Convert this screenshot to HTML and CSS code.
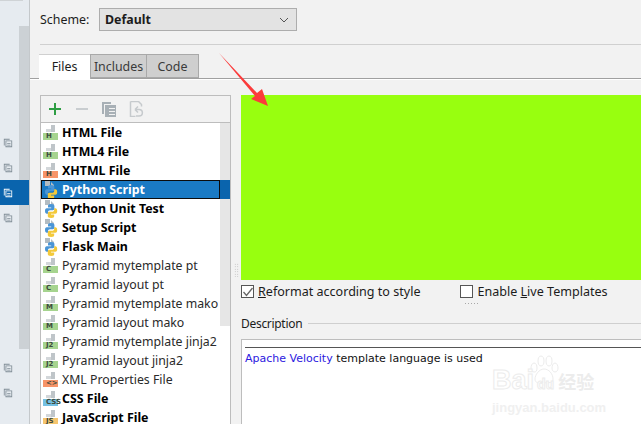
FILE: index.html
```html
<!DOCTYPE html>
<html lang="en">
<head>
<meta charset="utf-8">
<title>File and Code Templates</title>
<link rel="stylesheet" href="styles.css">
</head>
<body>
<svg class="defs" width="0" height="0" aria-hidden="true">
  <defs>
    <symbol id="copy" viewBox="0 0 12 12">
      <path d="M1 1h7v1H2v7H1z M3 3h8v8H3z M4 4v6h6V4z" fill="#7f8c95" fill-rule="evenodd"/>
      <path d="M5 6h4v1H5z M5 8h4v1H5z" fill="#7f8c95"/>
    </symbol>
    <symbol id="py" viewBox="0 0 16 18">
      <path d="M2 0h5v5H2z M8 1l3 3v1H8z" fill="#b3bcc2"/>
      <path d="M8 4c-2.600 0-3 1-3 2v1.500h3.200v.7H3.800C2.500 8.200 2 9.200 2 11s.7 2.800 1.800 2.800H5V12c0-1 .9-1.800 2-1.800h2.800c1 0 1.600-.7 1.600-1.600V6C11.400 4.800 10.500 4 8 4z" fill="#4a95d6"/>
      <path d="M8.200 18c2.600 0 3-1 3-2v-1.500H8v-.7h4.400c1.300 0 1.800-1 1.800-2.800s-.7-2.800-1.800-2.800H11.200V10c0 1-.9 1.800-2 1.800H6.400c-1 0-1.600.7-1.600 1.600V16c0 1.200.9 2 3.400 2z" fill="#f3c93a"/>
    </symbol>
  </defs>
</svg>
<div class="app">
  <aside class="side">
    <div class="side-top"></div>
    <div class="side-body">
      <div class="side-rows">
        <div class="side-row"><svg class="side-icon"><use href="#copy"/></svg></div>
        <div class="side-row"><svg class="side-icon"><use href="#copy"/></svg></div>
        <div class="side-row is-on"><svg class="side-icon"><use href="#copy"/></svg></div>
        <div class="side-row"><svg class="side-icon"><use href="#copy"/></svg></div>
        <div class="side-spacer"></div>
        <div class="side-row"><svg class="side-icon"><use href="#copy"/></svg></div>
        <div class="side-row"><svg class="side-icon"><use href="#copy"/></svg></div>
      </div>
      <div class="side-gutter"></div>
    </div>
  </aside>

  <main class="main">
    <div class="scheme">
      <label class="scheme-label">Scheme:</label>
      <div class="combo">
        <span class="combo-text">Default</span>
        <svg class="combo-arrow" width="10" height="6" viewBox="0 0 10 6"><path d="M1 1l4 4 4-4" fill="none" stroke="#555" stroke-width="1"/></svg>
      </div>
    </div>
    <div class="rule"></div>

    <div class="tabs">
      <div class="tab is-active">Files</div>
      <div class="tab tab-inc">Includes</div>
      <div class="tab tab-code">Code</div>
    </div>

    <div class="content">
      <section class="panel">
        <div class="toolbar">
          <svg class="tool" width="16" height="16" viewBox="0 0 16 16"><path d="M7 2h2v5h5v2H9v5H7V9H2V7h5z" fill="#2f9e44"/></svg>
          <svg class="tool" width="16" height="16" viewBox="0 0 16 16"><path d="M2 7h12v2H2z" fill="#c9cdd0"/></svg>
          <svg class="tool" width="16" height="16" viewBox="0 0 16 16"><path d="M1 1h9v2H3v10H1z" fill="#a8b0b6"/><path d="M4 4h11v12H4z" fill="#a8b0b6"/><path d="M8 7h6v1H8zM8 10h6v1H8zM8 13h6v1H8z" fill="#f2f2f2"/></svg>
          <svg class="tool" width="16" height="16" viewBox="0 0 16 16"><path d="M2.500.500h8l3 3v2M2.500.500v15h5" fill="none" stroke="#c6cacd" stroke-width="1.500"/><path d="M7 8.500h4c4.500 0 4.500 6.500 0 6.500H8M7 8.500l3-3M7 8.500l3 3" fill="none" stroke="#c6cacd" stroke-width="1.500"/></svg>
        </div>
        <div class="list-wrap">
          <ul class="list">
            <li class="row b"><span class="ficon"><span class="band green">H</span></span>HTML File</li>
            <li class="row b"><span class="ficon"><span class="band green">H</span></span>HTML4 File</li>
            <li class="row b"><span class="ficon"><span class="band orange">H</span></span>XHTML File</li>
            <li class="row b is-sel"><svg class="pyicon"><use href="#py"/></svg>Python Script</li>
            <li class="row b"><svg class="pyicon"><use href="#py"/></svg>Python Unit Test</li>
            <li class="row b"><svg class="pyicon"><use href="#py"/></svg>Setup Script</li>
            <li class="row b"><svg class="pyicon"><use href="#py"/></svg>Flask Main</li>
            <li class="row"><span class="ficon"><span class="band green">C</span></span>Pyramid mytemplate pt</li>
            <li class="row"><span class="ficon"><span class="band green">C</span></span>Pyramid layout pt</li>
            <li class="row"><span class="ficon"><span class="band green">M</span></span>Pyramid mytemplate mako</li>
            <li class="row"><span class="ficon"><span class="band green">M</span></span>Pyramid layout mako</li>
            <li class="row"><span class="ficon"><span class="band green">J2</span></span>Pyramid mytemplate jinja2</li>
            <li class="row"><span class="ficon"><span class="band green">J2</span></span>Pyramid layout jinja2</li>
            <li class="row"><span class="ficon"><span class="band orange">&lt;&gt;</span></span>XML Properties File</li>
            <li class="row b"><span class="ficon"><span class="band blue">CSS</span></span>CSS File</li>
            <li class="row b"><span class="ficon"><span class="band yellow">JS</span></span>JavaScript File</li>
          </ul>
          <div class="scroll"><div class="scroll-on"></div><div class="scroll-thumb"></div></div>
        </div>
      </section>

      <div class="split"><span class="grip"></span></div>

      <section class="editor">
        <div class="preview"></div>
        <div class="options">
          <label class="check"><span class="box is-checked"><svg width="16" height="16" viewBox="0 0 16 16"><path d="M3.500 8l3 3.500L12.500 4" fill="none" stroke="#666" stroke-width="1.300"/></svg></span><span><u>R</u>eformat according to style</span></label>
          <label class="check check-live"><span class="box"></span><span>Enable <u>L</u>ive Templates</span></label>
        </div>
        <div class="hgrip"></div>
        <div class="desc-head"><span class="desc-title">Description</span><span class="desc-line"></span></div>
        <div class="desc">
          <div class="desc-top"></div>
          <p class="desc-text"><span class="link">Apache Velocity</span> template language is used</p>
        </div>
      </section>
    </div>
  </main>
</div>

<svg class="arrow" width="52" height="56" viewBox="0 0 52 56"><path d="M0 0L38 40 43 36 49 53 32 46 36 43z" fill="#fb3b3b"/></svg>

<div class="mark">
  <svg class="mark-paw" width="34" height="30" viewBox="0 0 34 30"><path d="M17 14c-5 0-9 6-9 10s4 5 9 4 9 1 9-4-4-10-9-10z M7 8c2 0 3 2 3 5s-1 4-3 4-3-2-3-4 1-5 3-5z M14 1c2 0 3 2 3 5s-1 5-3 5-3-2-3-5 1-5 3-5z M22 1c2 0 3 2 3 5s-1 5-3 5-3-2-3-5 1-5 3-5z M28 8c2 0 3 3 3 5s-1 4-3 4-3-2-3-4 1-5 3-5z" fill="#fff" stroke="#ececec"/></svg>
  <div class="mark-top"><span>Bai</span><span class="mark-du">du</span><span class="mark-cn">经验</span></div>
  <div class="mark-sub">jingyan.baidu.com</div>
</div>
</body>
</html>
```
FILE: styles.css
```css
* { box-sizing: border-box; }
html, body { margin: 0; padding: 0; }
body {
  width: 641px;
  height: 424px;
  overflow: hidden;
  position: relative;
  background: #f2f2f2;
  font: 12.400px "Noto Sans", "Open Sans", sans-serif;
  color: #1c1c1c;
}
.defs { position: absolute; }
.app { display: flex; height: 424px; }

/* left strip */
.side {
  width: 30px;
  flex: none;
  background: #e6ebf0;
  border-right: 1px solid #c4c8cb;
  display: flex;
  flex-direction: column;
}
.side-top { height: 26px; flex: none; background: linear-gradient(#cfd3d6, #cfd3d6) 0 0 / 23px 1px no-repeat; }
.side-body { display: flex; flex: 1; }
.side-rows { width: 19px; flex: none; padding-top: 104px; }
.side-row {
  width: 29px;
  height: 25px;
  position: relative;
  z-index: 1;
  display: flex;
  align-items: center;
  padding-left: 3px;
}
.side-row.is-on { background: #0a64ad; }
.side-row.is-on .side-icon { filter: brightness(2.1); }
.side-spacer { height: 125px; }
.side-icon { width: 10px; height: 10px; display: block; }
.side-gutter { width: 10px; height: 323px; background: #ccd1d5; }

/* main */
.main { flex: 1; min-width: 0; display: flex; flex-direction: column; }
.scheme { display: flex; align-items: center; height: 23px; margin: 8px 0 0 10px; }
.scheme-label { width: 59px; padding-bottom: 1px; }
.combo {
  width: 198px;
  height: 23px;
  background: #e3e3e3;
  border: 1px solid #adadad;
  display: flex;
  align-items: center;
  justify-content: space-between;
  padding: 0 7px 0 5px;
}
.combo-text { font-weight: 700; padding-bottom: 1px; }
.rule { height: 1px; margin: 13px 0 0 10px; background: #d0d0d0; }

.tabs {
  display: flex;
  height: 25px;
  margin-top: 9px;
  padding-left: 9px;
  border-bottom: 1px solid #a0a0a0;
  box-shadow: 0 1px 0 #ffffff;
}
.tab {
  height: 24px;
  background: #cfcfcf;
  border: 1px solid #a9a9a9;
  border-left: 0;
  color: #3a3a3a;
  display: flex;
  align-items: center;
  justify-content: center;
}
.tab.is-active { width: 52px; background: #ffffff; border: 0; border-right: 1px solid #a9a9a9; height: 25px; color: #1c1c1c; box-shadow: inset 0 1px 0 #d0d0d0; }
.tab-inc { width: 56px; }
.tab-code { width: 52px; }

.content { flex: 1; min-height: 0; display: flex; padding: 16px 0 0 10px; }

.panel { width: 191px; flex: none; border: 1px solid #bdbdbd; border-bottom: 0; display: flex; flex-direction: column; height: 340px; }
.toolbar { height: 27px; flex: none; display: flex; align-items: center; gap: 11px; padding: 0 0 0 6px; border-bottom: 1px solid #bdbdbd; }
.tool { display: block; }
.list-wrap { flex: 1; display: flex; min-height: 0; background: #ffffff; overflow: hidden; }
.list { list-style: none; margin: 0; padding: 0; flex: 1; min-width: 0; }
.row { height: 19px; display: flex; align-items: center; white-space: nowrap; padding-left: 2px; font-size: 12.300px; color: #2a2a2a; }
.row.b { font-weight: 700; font-size: 12.400px; color: #000000; }
.row.is-sel { background: #1a7ac4; color: #ffffff; outline: 1px solid #0c0c0c; outline-offset: -1px; }
.scroll { width: 10px; flex: none; position: relative; background: #ffffff; }
.scroll-thumb { position: absolute; left: 0; right: 0; top: 0; height: 203px; background: #e6e6e6; }
.scroll-on { position: absolute; left: 0; right: 0; top: 57px; height: 19px; background: #0a64ad; z-index: 1; }

.ficon {
  width: 16px;
  height: 17px;
  margin-right: 3px;
  flex: none;
  position: relative;
  display: block;
  background:
    linear-gradient(#bfc5c9, #bfc5c9) 8px 1px / 4px 7px no-repeat,
    linear-gradient(#d3d7da, #d3d7da) 3px 5px / 5px 3px no-repeat;
}
.band {
  position: absolute;
  left: 0;
  right: 1px;
  bottom: 1px;
  height: 7px;
  font: 700 7px/7px "DejaVu Sans", sans-serif;
  color: #3d4a3d;
  padding-left: 3px;
}
.band.green { background: #a6d48f; }
.band.orange { background: #f79468; }
.band.blue { background: #74c0e3; }
.band.yellow { background: #f5c56e; }
.pyicon { width: 16px; height: 18px; margin-right: 3px; flex: none; display: block; }

.split { width: 10px; flex: none; display: flex; align-items: flex-start; justify-content: center; padding-top: 168px; }
.grip { width: 5px; height: 14px; background: radial-gradient(circle, #b5b5b5 0.7px, transparent 0.8px) 0 0 / 2.500px 2.500px; }

.editor { flex: 1; min-width: 0; display: flex; flex-direction: column; }
.preview { height: 185px; flex: none; background: #98ff0f; }
.options { display: flex; align-items: center; height: 18px; margin-top: 2px; font-size: 12.550px; }
.check { display: flex; align-items: center; gap: 4px; white-space: nowrap; }
.check-live { margin-left: 40px; }
.box { width: 13px; height: 13px; background: #ffffff; border: 1px solid #555; display: block; flex: none; position: relative; }
.box.is-checked svg { position: absolute; left: -2px; top: -2px; }
.hgrip { width: 16px; height: 4px; margin: 2px 0 0 223px; background: radial-gradient(circle, #a8a8a8 0.7px, transparent 0.8px) 0 0 / 3px 3px; }
.desc-head { display: flex; align-items: center; height: 18px; margin-top: 8px; gap: 6px; }
.desc-title { font-size: 12px; letter-spacing: -0.300px; }
.desc-line { flex: 1; height: 1px; background: #cfcfcf; }
.desc { flex: 1; margin-top: 7px; padding-top: 7px; background: #ffffff; border: 1px solid #bdbdbd; border-right: 0; border-bottom: 0; }
.desc-top { height: 1px; margin-left: 3px; background: #555555; }
.desc-text { margin: 4px 0 0 3px; font: 11px "DejaVu Sans", sans-serif; color: #111111; white-space: nowrap; }
.link { color: #2c18e0; }

/* annotation overlay */
.arrow { position: absolute; left: 219px; top: 53px; }

/* watermark overlay */
.mark { position: absolute; left: 492px; top: 355px; width: 116px; color: #ffffff; font-family: "Liberation Sans", "Noto Sans CJK SC", sans-serif; }
.mark-paw { position: absolute; left: 35px; top: 0; }
.mark-top { display: flex; align-items: baseline; margin-top: 12px; font-size: 27px; line-height: 26px; font-weight: 700; white-space: nowrap; -webkit-text-stroke: 1px #ececec; position: relative; }
.mark-du { font-size: 14px; margin: 0 4px 0 3px; }
.mark-cn { font-size: 18px; -webkit-text-stroke: 0; color: #ececec; }
.mark-sub { font-size: 13px; line-height: 16px; margin-top: 3px; font-weight: 700; white-space: nowrap; color: #f0f0f0; }
```
